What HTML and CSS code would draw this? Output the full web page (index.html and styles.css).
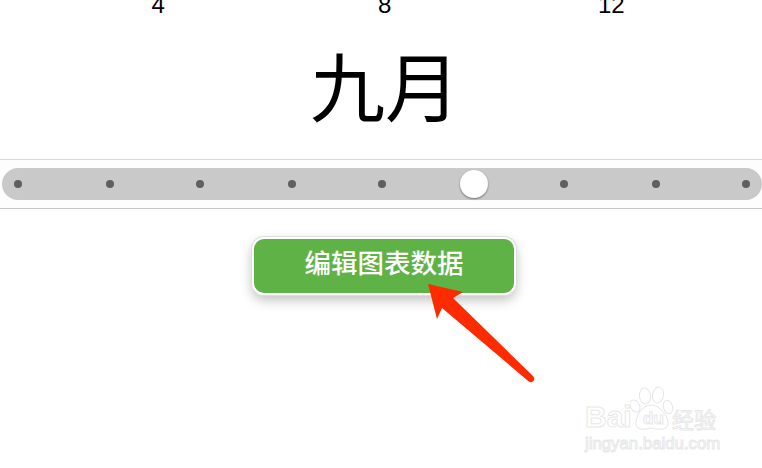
FILE: index.html
```html
<!DOCTYPE html>
<html lang="zh">
<head>
<meta charset="utf-8">
<title>九月</title>
<link rel="stylesheet" href="styles.css">
</head>
<body>
<main class="page">
  <div class="axis"><span>4</span><span>8</span><span>12</span></div>
  <h1 class="month">九月</h1>
  <section class="slider-band">
    <div class="track">
      <i class="dot"></i><i class="dot"></i><i class="dot"></i><i class="dot"></i><i class="dot"></i>
      <i class="knob"></i>
      <i class="dot"></i><i class="dot"></i><i class="dot"></i>
    </div>
  </section>
  <div class="action"><button class="edit">编辑图表数据</button></div>

  <svg class="arrow" viewBox="0 0 120 110" width="120" height="110" aria-hidden="true">
    <path d="M8 4 L43 12 L33 18 L113 96 Q116 100 112 102 Q110 103 107 100 L22 28 L17 39 Z" fill="#fe2a00"/>
  </svg>

  <div class="watermark" aria-label="Baidu 经验">
    <span class="wm-bai">Bai</span>
    <svg class="wm-paw" viewBox="0 0 44 48" width="44" height="48" aria-hidden="true">
      <g fill="#fff" stroke="#e6e6e6" stroke-width="1">
        <ellipse cx="15" cy="11" rx="5.5" ry="8" transform="rotate(-8 15 11)"/>
        <ellipse cx="28" cy="10" rx="5.5" ry="8" transform="rotate(10 28 10)"/>
        <ellipse cx="5" cy="21" rx="4.5" ry="6.5" transform="rotate(-30 5 21)"/>
        <ellipse cx="38" cy="22" rx="4.5" ry="7" transform="rotate(-15 38 22)"/>
        <path d="M21 20 C30 20 38 31 38 38 C38 45 30 45 21 43 C12 45 6 45 6 38 C6 31 12 20 21 20 Z"/>
      </g>
    </svg>
    <span class="wm-du">du</span>
    <span class="wm-jy">经验</span>
    <span class="wm-url">jingyan.baidu.com</span>
  </div>
</main>
</body>
</html>
```
FILE: styles.css
```css
* { box-sizing: border-box; }
html, body { margin: 0; padding: 0; }
body {
  width: 762px;
  height: 468px;
  overflow: hidden;
  background: #fff;
  font-family: "Liberation Sans", "Noto Sans CJK SC", sans-serif;
}
.page { position: relative; width: 762px; height: 468px; overflow: hidden; }
.axis {
  display: grid;
  grid-template-columns: repeat(3, 226.5px);
  padding-left: 45px;
  margin-top: -9px;
  height: 28px;
  font-size: 24px;
  line-height: 28px;
  text-align: center;
  color: #000;
}
.month {
  margin: 0;
  height: 140px;
  padding-left: 8px;
  text-align: center;
  font-family: "Noto Sans CJK SC", sans-serif;
  font-weight: 400;
  font-size: 75px;
  line-height: 130px;
  letter-spacing: 0;
  color: #000;
}
.slider-band {
  height: 50px;
  padding: 8px 0 8px 2px;
  background: #fdfdfd;
  border-top: 1px solid #d8d8d8;
  border-bottom: 1px solid #c9c9c9;
}
.track {
  height: 32px;
  border-radius: 16px;
  background: #c9c9c9;
  display: flex;
  align-items: center;
  justify-content: space-between;
  padding: 0 12px;
}
.track > :nth-child(even) { transform: translateX(1px); }
.dot { width: 8px; height: 8px; border-radius: 50%; background: #5f5f5f; }
.knob {
  width: 28px;
  height: 28px;
  margin: 0 -10px;
  border-radius: 50%;
  background: #fff;
  box-shadow: 0 1px 2px rgba(0, 0, 0, .45);
}
.action { display: flex; justify-content: center; padding-top: 28px; padding-left: 6px; }
.edit {
  width: 264px;
  height: 58px;
  padding: 0 0 9px;
  border: 2px solid #fff;
  border-radius: 12px;
  background: #5fb246;
  color: #fff;
  font-family: "Noto Sans CJK SC", sans-serif;
  font-size: 26.5px;
  font-weight: 500;
  box-shadow: 0 0 0 1px #dedede, 0 5px 12px rgba(0, 0, 0, .25);
}
.arrow { position: absolute; left: 420px; top: 280px; }
.watermark { position: absolute; left: 585px; top: 385px; width: 140px; height: 70px; color: transparent; }
.watermark span {
  position: absolute;
  -webkit-text-stroke: 1px #e8e8e8;
  white-space: nowrap;
}
.wm-bai { left: 0; top: 16px; font-size: 30px; line-height: 32px; font-weight: 700; }
.wm-paw { position: absolute; left: 45px; top: 0; }
.wm-du { left: 58px; top: 24px; font-size: 17px; line-height: 20px; font-weight: 700; }
.wm-jy { left: 87px; top: 19px; font-family: "Noto Sans CJK SC", sans-serif; font-size: 22px; line-height: 28px; }
.wm-url { left: 0; top: 49px; font-size: 16.8px; line-height: 20px; }
```
